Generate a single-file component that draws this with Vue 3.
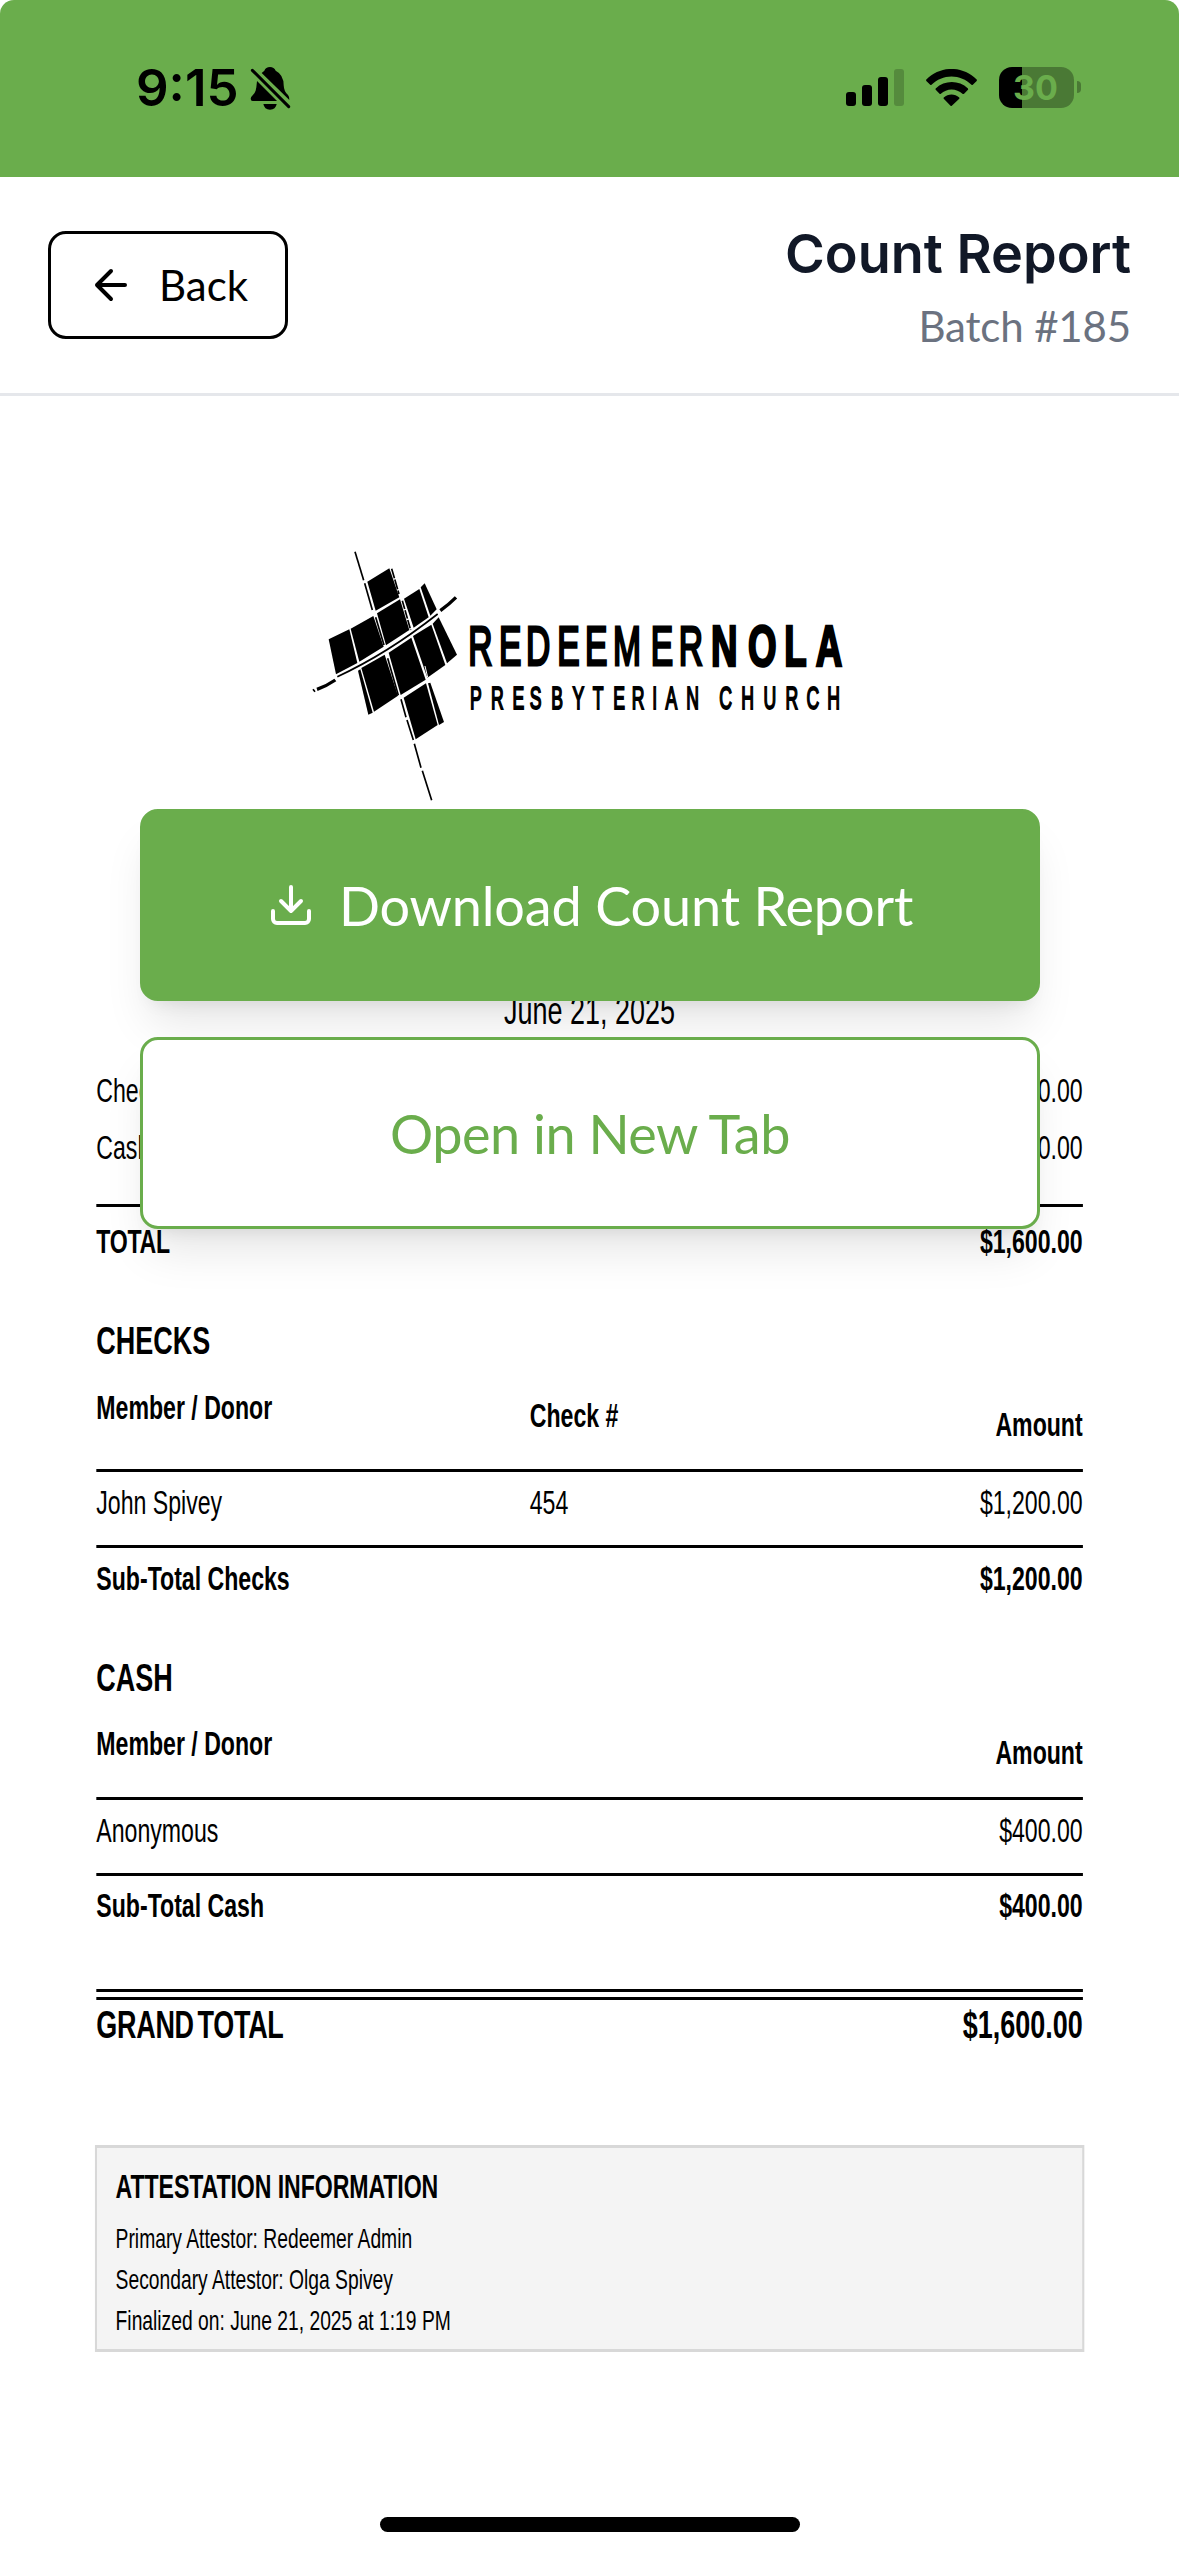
<script setup>
// Start position of every letter in the church wordmark, in logo pixels.
const place = (origin, scale, xs) => xs.map((x) => ((x - origin) / scale).toFixed(1)).join(' ')

const wordmark = place(468.3, 0.6, [468.3, 499, 526, 557.3, 585, 612.9, 650.8, 678.8])
const wordmarkBold = place(711, 0.65, [711, 748, 784.3, 815.7])
const subline = place(469.9, 0.55, [
  469.9, 490.9, 512.5, 529.8, 551.2, 572.6, 592.9, 613.2, 631.9, 652.3, 665.6, 686.2,
  706, 719.4, 741.2, 763.5, 785.5, 806.4, 827.2,
])

const attestation = [
  'Primary Attestor: Redeemer Admin',
  'Secondary Attestor: Olga Spivey',
  'Finalized on: June 21, 2025 at 1:19 PM',
]
</script>

<template>
  <div class="screen">
    <div class="status-bar">
      <div class="status-left">
        <span class="clock">9:15</span>
        <svg class="bell" viewBox="750 198 122 132">
          <path d="M771 243 L831 303 H758 Q752 303 752 296 Q752 291 758 286 Q768 276 769 262 Z" />
          <path d="M785 219 Q790 214 793 212 Q797 201 810 201 Q822 201 827 212 Q851 224 851 256 Q852 276 864 285 Q869 291 868 300 Z" />
          <path d="M790 312 H830 Q827 329 810 329 Q793 329 790 312 Z" />
          <path d="M757 211 L866 320" stroke="#000" stroke-width="9" stroke-linecap="round" />
        </svg>
      </div>
      <div class="status-right">
        <div class="signal">
          <i class="bar b1"></i><i class="bar b2"></i><i class="bar b3"></i><i class="bar b4"></i>
        </div>
        <svg class="wifi" viewBox="0.6 0.1 15.8 11.2" preserveAspectRatio="none">
          <path d="M8.5 2.4c2.3 0 4.5.9 6.2 2.5.1.1.3.1.4 0l1.2-1.2c.1-.1.1-.3 0-.4C12-1 5-1 .7 3.3c-.1.1-.1.3 0 .4l1.2 1.2c.1.1.3.1.4 0C4 3.3 6.2 2.4 8.5 2.4z" />
          <path d="M8.5 6.3c1.3 0 2.5.5 3.4 1.3.1.1.3.1.5 0l1.2-1.2c.1-.1.1-.3 0-.4-2.8-2.6-7.2-2.6-10 0-.1.1-.1.3 0 .4l1.2 1.2c.1.1.3.1.4 0 .9-.8 2.1-1.3 3.3-1.3z" />
          <path d="M10.9 9.1c.1-.1.1-.3 0-.4-1.4-1.2-3.4-1.2-4.8 0-.1.1-.1.3 0 .4l2.1 2.1c.1.1.3.1.4 0z" />
        </svg>
        <div class="battery"><span>30</span></div>
        <i class="nub"></i>
      </div>
    </div>

    <header class="header">
      <button class="back">
        <svg class="icon" viewBox="0 0 24 24"><path d="M12 19l-7-7 7-7M19 12H5" /></svg>
        <span>Back</span>
      </button>
      <div class="titles">
        <h1>Count Report</h1>
        <p>Batch #185</p>
      </div>
    </header>

    <main class="preview">
      <svg class="logo" viewBox="290 530 570 290">
        <g transform="translate(290 530) scale(.33333)">
          <g class="blocks">
            <path d="M232 155L298 115 328 202 257 242Z" />
            <path d="M116 328L178 298 202 399 138 433Z" />
            <path d="M182 296L250 258 281 350 208 395Z" />
            <path d="M261 250L330 208 358 300 288 346Z" />
            <path d="M342 206L388 177 416 262 371 293Z" />
            <path d="M392 172L404 160 440 238 421 257Z" />
            <path d="M204 422L211 418 248 548 235 554Z" />
            <path d="M214 414L284 374 324 497 252 545Z" />
            <path d="M296 368L364 323 407 449 332 495Z" />
            <path d="M369 318L424 284 466 405 412 443Z" />
            <path d="M428 281L446 262 501 374 471 400Z" />
            <path d="M341 503L408 460 443 585 377 628Z" />
            <path d="M414 460L421 458 462 576 447 585Z" />
          </g>
          <g class="threads">
            <path d="M195 65L221 151" />
            <path d="M224 160L247 240" />
            <path d="M257 262L282 345" />
            <path d="M293 385L325 496" />
            <path d="M333 508L348 562M351 570L370 630" />
            <path d="M373 641L393 713M397 722L425 811" />
            <path d="M305 116L327 192" stroke-dasharray="30 4" />
            <path d="M337 212L362 300" stroke-dasharray="26 4" />
            <path d="M142 440Q290 372 443 252" />
          </g>
          <path class="tail" d="M81 478Q110 468 136 450" />
          <path class="tail" d="M70 483L74 480" />
          <path class="tail" d="M451 242Q478 222 498 202" />
          <path class="cut" d="M405 408L413 442" />
        </g>
        <g class="lettering">
          <text class="thin" transform="translate(468.3 665.4) scale(.6 1)" :x="wordmark">REDEEMER</text>
          <text class="bold" transform="translate(711 665.6) scale(.65 1)" :x="wordmarkBold">NOLA</text>
          <text class="small" transform="translate(469.9 709.2) scale(.55 1)" :x="subline">PRESBYTERIAN CHURCH</text>
        </g>
      </svg>

      <div class="sheet">
        <div class="row date">June 21, 2025</div>
        <div class="row mt-checks"><span>Checks</span><span>$1,200.00</span></div>
        <div class="row mt-cash"><span>Cash</span><span>$400.00</span></div>
        <hr class="rule mt-total-rule" />
        <div class="row strong mt-total"><span class="tight">TOTAL</span><span>$1,600.00</span></div>

        <h2 class="row heading">CHECKS</h2>
        <div class="row strong columns">
          <span>Member / Donor</span><span class="mid">Check #</span><span class="end">Amount</span>
        </div>
        <hr class="rule mt-head-rule" />
        <div class="row mt-line"><span>John Spivey</span><span class="ref">454</span><span>$1,200.00</span></div>
        <hr class="rule mt-sub-rule" />
        <div class="row strong mt-line"><span>Sub-Total Checks</span><span>$1,200.00</span></div>

        <h2 class="row heading">CASH</h2>
        <div class="row strong columns cash-columns">
          <span>Member / Donor</span><span class="end">Amount</span>
        </div>
        <hr class="rule mt-head-rule" />
        <div class="row mt-line"><span>Anonymous</span><span>$400.00</span></div>
        <hr class="rule mt-sub-rule" />
        <div class="row strong mt-subcash"><span>Sub-Total Cash</span><span>$400.00</span></div>

        <hr class="rule mt-grand-rule" />
        <hr class="rule mt-double" />
        <div class="row strong grand"><span class="tight">GRAND TOTAL</span><span>$1,600.00</span></div>

        <section class="attest">
          <h3>ATTESTATION INFORMATION</h3>
          <p v-for="line in attestation" :key="line">{{ line }}</p>
        </section>
      </div>

      <div class="actions">
        <button class="action primary">
          <svg class="icon" viewBox="0 0 24 24"><path d="M21 15v4a2 2 0 0 1-2 2H5a2 2 0 0 1-2-2v-4M7 10l5 5 5-5M12 15V3" /></svg>
          <span>Download Count Report</span>
        </button>
        <button class="action secondary"><span>Open in New Tab</span></button>
      </div>
    </main>
    <div class="home-indicator"></div>
  </div>
</template>

<style>
body { margin: 0; background: #fff; }
</style>

<style scoped>
* { box-sizing: border-box; }
h1, h2, h3, p { margin: 0; }
button { padding: 0; margin: 0; }

.screen {
  position: relative;
  width: 1179px;
  height: 2556px;
  overflow: hidden;
  background: #fff;
  color: #000;
  font-family: Lato, sans-serif;
}

.status-bar {
  display: flex;
  justify-content: space-between;
  height: 177px;
  padding: 67px 98px 0 136px;
  border-radius: 14px 14px 0 0;
  background: #6aad4c;
}
.status-left, .status-right { display: flex; align-items: flex-start; }
.clock {
  width: 114px;
  line-height: 42px;
  font-family: Inter, sans-serif;
  font-size: 51px;
  font-weight: 600;
  white-space: nowrap;
}
.bell { width: 40.7px; height: 44px; margin-top: -1px; }
.signal { display: flex; align-items: flex-end; gap: 6px; height: 39px; }
.bar { width: 10px; border-radius: 3px; background: #000; }
.b1 { height: 14px; }
.b2 { height: 21px; }
.b3 { height: 29px; }
.b4 { height: 37px; background: #558b3d; }
.wifi { width: 51px; height: 37px; margin: 2px 22px 0; }
.battery {
  width: 75px;
  height: 41px;
  padding-right: 2px;
  border-radius: 13px;
  background: linear-gradient(90deg, #000 23px, #4a7935 23px);
  color: #6aad4c;
  font-family: Inter, sans-serif;
  font-size: 34px;
  font-weight: 700;
  line-height: 41px;
  text-align: center;
}
.nub { width: 4px; height: 12px; margin: 14px 0 0 3px; border-radius: 0 4px 4px 0; background: #4a7935; }

.header {
  display: flex;
  justify-content: space-between;
  align-items: flex-start;
  height: 219px;
  padding: 54px 48px 0;
  border-bottom: 3px solid #e5e7eb;
}
.icon {
  width: 48px;
  height: 48px;
  fill: none;
  stroke: currentColor;
  stroke-width: 2;
  stroke-linecap: round;
  stroke-linejoin: round;
}
.back {
  display: flex;
  align-items: center;
  gap: 24px;
  width: 240px;
  height: 108px;
  padding: 0 36px;
  border: 3px solid #000;
  border-radius: 18px;
  background: #fff;
  color: #000;
  font: 400 42px/60px Lato, sans-serif;
}
.titles { text-align: right; }
h1 {
  margin-top: -19px;
  color: #111827;
  font: 600 54px/84px Inter, sans-serif;
}
.titles p { color: #6b7280; font-size: 42px; line-height: 60px; letter-spacing: -0.15px; }

.preview { position: relative; height: 2160px; padding-top: 134px; }
.logo { display: block; width: 570px; height: 290px; margin-left: 290px; }
.threads path { fill: none; stroke: #000; stroke-width: 5; }
.tail { fill: none; stroke: #000; stroke-width: 10; }
.cut { stroke: #fff; stroke-width: 3; }
.lettering text {
  font-family: "Liberation Sans", Arial, sans-serif;
  stroke: #000;
  vector-effect: non-scaling-stroke;
}
.lettering .thin { font-size: 56px; stroke-width: 2.4px; }
.lettering .bold { font-size: 56.5px; font-weight: 700; stroke-width: 2.2px; }
.lettering .small { font-size: 32px; stroke-width: 1.6px; }

/* The report page is narrower than its natural proportions. */
.sheet {
  width: 1713.66px;
  margin-top: 170px;
  padding: 0 140px;
  transform: scaleX(0.688);
  transform-origin: 0 0;
  font-family: "Liberation Sans", Arial, sans-serif;
}
.row {
  display: flex;
  justify-content: space-between;
  height: 40px;
  font-size: 33.6px;
  font-weight: 400;
  line-height: 42px;
  white-space: nowrap;
}
.row.strong { font-weight: 700; }
.row.date { justify-content: center; font-size: 39.2px; }
.row.heading { margin-top: 59px; font-size: 39.2px; font-weight: 700; }
.row.columns { height: 57px; margin-top: 27px; }
.row.cash-columns { height: 49px; margin-top: 26px; }
.row.grand { margin-top: 4px; font-size: 39.2px; }
.tight { letter-spacing: -0.4px; }
.grand .tight { letter-spacing: -0.4px; word-spacing: -5px; }
.columns > span:first-child, .row > span:nth-last-child(3) { width: 630px; }
.mid { padding-top: 8px; margin-right: auto; }
.ref { margin-right: auto; }
.end { padding-top: 17px; }
.cash-columns .end { padding-top: 9px; }
.rule { height: 3px; margin: 0; border: 0; background: #000; }
.mt-checks { margin-top: 40px; }
.mt-cash { margin-top: 17px; }
.rule.mt-total-rule { margin-top: 37px; }
.mt-total { margin-top: 14px; }
.rule.mt-head-rule { margin-top: 25px; }
.mt-line { margin-top: 10px; }
.rule.mt-sub-rule { margin-top: 23px; }
.mt-subcash { margin-top: 9px; }
.rule.mt-grand-rule { margin-top: 64px; }
.rule.mt-double { margin-top: 5px; }

.attest {
  height: 207px;
  margin: 101px -2px 0;
  padding: 18px 28px 0 27px;
  border: 3px solid #d8d8d8;
  background: #f4f4f4;
  white-space: nowrap;
}
.attest h3 { height: 40px; margin-bottom: 12px; font-size: 33.6px; line-height: 42px; letter-spacing: -0.1px; }
.attest p { font-size: 28px; line-height: 41px; }

.actions {
  position: absolute;
  top: 413px;
  left: 140px;
  display: flex;
  flex-direction: column;
  gap: 36px;
  width: 900px;
}
.action {
  display: flex;
  align-items: center;
  justify-content: center;
  gap: 24px;
  height: 192px;
  border: 3px solid #6aad4c;
  border-radius: 18px;
  box-shadow: 0 30px 45px -9px rgba(0, 0, 0, 0.1), 0 12px 18px -12px rgba(0, 0, 0, 0.1);
  font: 400 54px/84px Lato, sans-serif;
}
.action span { padding-top: 2px; }
.primary { background: #6aad4c; color: #fff; letter-spacing: -0.15px; }
.secondary { background: #fff; color: #6aad4c; letter-spacing: -0.5px; }

.home-indicator {
  position: absolute;
  left: 380px;
  bottom: 24px;
  width: 420px;
  height: 15px;
  border-radius: 8px;
  background: #000;
}
</style>
